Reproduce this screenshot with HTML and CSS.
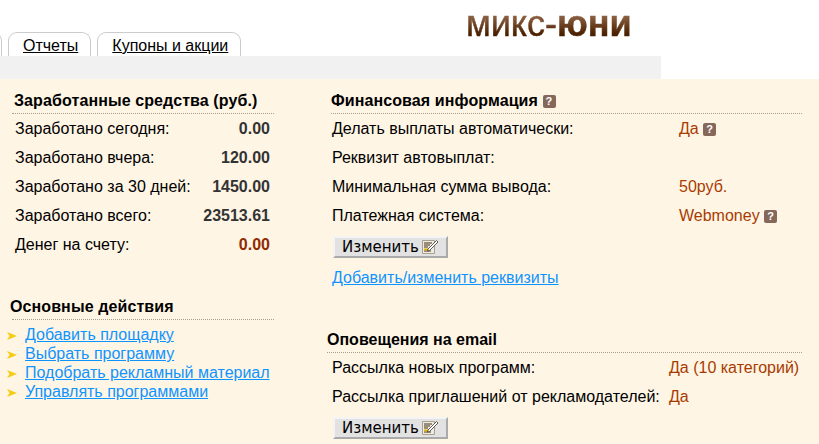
FILE: index.html
```html
<!DOCTYPE html>
<html lang="ru">
<head>
    <meta charset="UTF-8">
    <title>Микс-Юни</title>
    <link rel="stylesheet" href="styles.css">
</head>
<body>
    <div class="top">
        <div class="tabs">
            <a class="tab tab-cut" href="#"></a>
            <a class="tab" href="#">Отчеты</a>
            <a class="tab" href="#">Купоны и акции</a>
        </div>
        <div class="logo">микс-<b>юни</b></div>
    </div>
    <div class="subnav"></div>

    <div class="content">
        <div class="col-left">
            <h3 class="title">Заработанные средства (руб.)</h3>
            <div class="stat"><span>Заработано сегодня:</span><b>0.00</b></div>
            <div class="stat"><span>Заработано вчера:</span><b>120.00</b></div>
            <div class="stat"><span>Заработано за 30 дней:</span><b>1450.00</b></div>
            <div class="stat"><span>Заработано всего:</span><b>23513.61</b></div>
            <div class="stat"><span>Денег на счету:</span><b class="red">0.00</b></div>

            <h3 class="title actions-title">Основные действия</h3>
            <ul class="actions">
                <li><a href="#">Добавить площадку</a></li>
                <li><a href="#">Выбрать программу</a></li>
                <li><a href="#">Подобрать рекламный материал</a></li>
                <li><a href="#">Управлять программами</a></li>
            </ul>
        </div>

        <div class="col-right">
            <h3 class="title">Финансовая информация <span class="help">?</span></h3>
            <div class="row"><span>Делать выплаты автоматически:</span><em>Да <span class="help">?</span></em></div>
            <div class="row"><span>Реквизит автовыплат:</span></div>
            <div class="row"><span>Минимальная сумма вывода:</span><em>50руб.</em></div>
            <div class="row"><span>Платежная система:</span><em>Webmoney <span class="help">?</span></em></div>
            <button class="btn">Изменить
                <svg width="18" height="16" viewBox="0 0 18 16">
                    <path d="M1.5 1.5h12v13h-12z" fill="#ecebe4" stroke="#a8a08c"/>
                    <path d="M3 4h8M3 6h6M3 8h4M3 12h7" stroke="#4a2e14"/>
                    <path d="M3 9.5h4.5v2H3z" fill="#e0b400"/>
                    <path d="M7 10l8.5-8.5 1.5 1.5-8.5 8.5-2 .5z" fill="#fff" stroke="#3c3628" stroke-width=".8"/>
                </svg>
            </button>
            <a class="edit-link" href="#">Добавить/изменить реквизиты</a>

            <h3 class="title email-title">Оповещения на email</h3>
            <div class="row row-email"><span>Рассылка новых программ:</span><em>Да (10 категорий)</em></div>
            <div class="row row-email"><span>Рассылка приглашений от рекламодателей:</span><em>Да</em></div>
            <button class="btn">Изменить
                <svg width="18" height="16" viewBox="0 0 18 16">
                    <path d="M1.5 1.5h12v13h-12z" fill="#ecebe4" stroke="#a8a08c"/>
                    <path d="M3 4h8M3 6h6M3 8h4M3 12h7" stroke="#4a2e14"/>
                    <path d="M3 9.5h4.5v2H3z" fill="#e0b400"/>
                    <path d="M7 10l8.5-8.5 1.5 1.5-8.5 8.5-2 .5z" fill="#fff" stroke="#3c3628" stroke-width=".8"/>
                </svg>
            </button>
        </div>
    </div>
</body>
</html>
```

FILE: styles.css
```css
* {
    margin: 0;
    padding: 0;
    box-sizing: border-box;
}

html, body {
    height: 100%;
    overflow: hidden;
}

body {
    font-family: "Liberation Sans", Arial, sans-serif;
    font-size: 16px;
    color: #000;
    background: #fff;
    display: flex;
    flex-direction: column;
}

.top {
    height: 56px;
    display: flex;
    align-items: flex-start;
}

.tabs {
    display: flex;
    gap: 6px;
    margin-left: -76px;
    padding-top: 32px;
    width: 542px;
}

.tab {
    height: 24px;
    padding: 4px 12px 0 14px;
    border: 1px solid #ccc;
    border-bottom: 0;
    border-radius: 9px 9px 0 0;
    color: #000;
    line-height: 18px;
    text-decoration: underline;
    background: #fff;
}

.tab-cut {
    width: 78px;
}

.logo {
    margin-top: 4px;
    font-size: 36px;
    line-height: 40px;
    white-space: nowrap;
    background: linear-gradient(180deg, #94684a 25%, #4a2000 75%);
    -webkit-background-clip: text;
    background-clip: text;
    color: transparent;
    -webkit-text-stroke: 0.5px transparent;
}

.subnav {
    width: 661px;
    height: 23px;
    background: #f1f1f1;
}

.content {
    flex: 1;
    display: flex;
    background: #fff5e5;
    padding-top: 12px;
}

.col-left {
    width: 331px;
    padding-left: 12px;
}

.col-right {
    width: 471px;
}

.title {
    font-size: 16px;
    line-height: 19px;
    height: 23px;
    padding-left: 2px;
    border-bottom: 1px dotted #a99f8f;
    width: 262px;
    letter-spacing: 0.1px;
}

.col-right .title {
    width: 100%;
    padding-left: 0;
}

.stat {
    display: flex;
    justify-content: space-between;
    width: 255px;
    margin-left: 3px;
    height: 29px;
    line-height: 29px;
}

.stat b {
    color: #333;
}

.stat b.red {
    color: #8f2b00;
}

.actions-title {
    margin-top: 38px;
    padding-left: 0;
    text-indent: -2px;
}

.actions {
    list-style: none;
    margin-left: -12px;
    padding-top: 5px;
}

.actions li {
    padding-left: 25px;
    height: 19px;
    line-height: 19px;
    position: relative;
}

.actions li::before {
    content: "";
    position: absolute;
    left: 7px;
    top: 7px;
    width: 10px;
    height: 8px;
    background: #f5cc14;
    clip-path: polygon(0 0, 100% 50%, 0 100%, 25% 50%);
}

a {
    color: #0f94ff;
}

.row {
    display: flex;
    height: 29px;
    line-height: 29px;
    padding-left: 1px;
}

.row > span:first-child {
    width: 347px;
}

.row em {
    font-style: normal;
    color: #a83c00;
}

.help {
    display: inline-block;
    width: 13px;
    height: 13px;
    border-radius: 2px;
    background: #86685a;
    color: #fff;
    font-size: 11px;
    font-weight: bold;
    line-height: 13px;
    text-align: center;
    vertical-align: 1px;
}

.btn {
    display: flex;
    align-items: center;
    gap: 2px;
    width: 115px;
    height: 22px;
    margin-top: 6px;
    margin-left: 2px;
    padding-left: 7px;
    font-family: "DejaVu Sans", sans-serif;
    font-size: 15px;
    color: #000;
    background: #e2e2e2;
    border: 2px solid;
    border-color: #f4f4f4 #aaa #aaa #f4f4f4;
}

.edit-link {
    display: block;
    margin-top: 11px;
    margin-left: 1px;
    line-height: 17px;
}

.email-title {
    margin-top: 44px;
    margin-left: -4px;
    width: calc(100% + 4px) !important;
    letter-spacing: 0;
}

.row-email > span:first-child {
    width: 337px;
}
```
